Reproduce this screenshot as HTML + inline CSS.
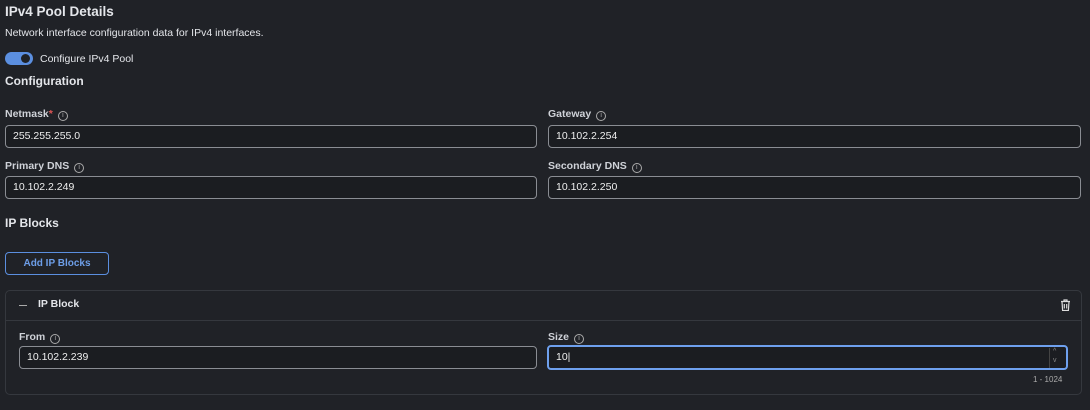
<!DOCTYPE html>
<html><head><style>
body{margin:0;width:1090px;height:410px;background:#202227;font-family:"Liberation Sans",sans-serif;color:#e4e6ea;position:relative;overflow:hidden}
.a{position:absolute;white-space:nowrap}
.h1{font-size:13.5px;font-weight:bold}
.lbl{font-size:10.5px;font-weight:bold;color:#cfd2d8}
.i{display:inline-block;width:8px;height:8px;border:1px solid #aaa;border-radius:50%;font-size:7px;line-height:8px;text-align:center;color:#aaa;margin-left:5px;vertical-align:0px;font-weight:normal}
.in{position:absolute;height:21px;border:1px solid #8a8d93;border-radius:4px;background:#1b1d21;font-size:10.5px;line-height:21px;padding-left:7px;box-sizing:content-box;color:#eee}
</style></head><body>
<div class="a h1" style="left:5px;top:4px">IPv4 Pool Details</div>
<div class="a" style="left:5px;top:27px;font-size:10.5px">Network interface configuration data for IPv4 interfaces.</div>
<div class="a" style="left:5px;top:52px;width:28px;height:13px;border-radius:7px;background:#5b8fe0"><div style="position:absolute;right:3px;top:2px;width:9px;height:9px;border-radius:50%;background:#1f2227"></div></div>
<div class="a" style="left:40px;top:53px;font-size:10.5px">Configure IPv4 Pool</div>
<div class="a" style="left:5px;top:74px;font-size:12px;font-weight:bold">Configuration</div>
<div class="a lbl" style="left:5px;top:108px">Netmask<span style="color:#e05555">*</span><span class="i">i</span></div>
<div class="in" style="left:5px;top:125px;width:523px">255.255.255.0</div>
<div class="a lbl" style="left:548px;top:108px">Gateway<span class="i">i</span></div>
<div class="in" style="left:548px;top:125px;width:524px">10.102.2.254</div>
<div class="a lbl" style="left:5px;top:160px">Primary DNS<span class="i">i</span></div>
<div class="in" style="left:5px;top:176px;width:523px">10.102.2.249</div>
<div class="a lbl" style="left:548px;top:160px">Secondary DNS<span class="i">i</span></div>
<div class="in" style="left:548px;top:176px;width:524px">10.102.2.250</div>
<div class="a" style="left:5px;top:216px;font-size:12px;font-weight:bold">IP Blocks</div>
<div class="a" style="left:5px;top:252px;width:102px;height:21px;border:1px solid #5b8fe0;border-radius:4px;color:#6d9ee8;font-size:10px;font-weight:bold;text-align:center;line-height:21px">Add IP Blocks</div>
<div class="a" style="left:5px;top:290px;width:1075px;height:103px;border:1px solid #35383e;border-radius:5px"></div>
<div class="a" style="left:6px;top:320px;width:1075px;height:1px;background:#35383e"></div>
<div class="a" style="left:19px;top:305px;width:8px;height:1px;background:#aaa"></div>
<div class="a" style="left:38px;top:298px;font-size:10.5px;font-weight:bold">IP Block</div>
<svg class="a" style="left:1060px;top:299px" width="11" height="12" viewBox="0 0 11 12"><path d="M1 2.5h9M4 2.5V1h3v1.5M2 2.5l.6 9h5.8l.6-9M4.3 5v4.5M6.7 5v4.5" stroke="#ddd" fill="none" stroke-width="1.2"/></svg>
<div class="a lbl" style="left:19px;top:331px">From<span class="i">i</span></div>
<div class="in" style="left:19px;top:346px;width:509px">10.102.2.239</div>
<div class="a lbl" style="left:548px;top:331px">Size<span class="i">i</span></div>
<div class="in" style="left:547px;top:345px;width:510px;border:2px solid #6ea0ee;height:21px">10|</div>
<div class="a" style="left:1049px;top:348px;width:1px;height:20px;background:#444"></div>
<div class="a" style="left:1053px;top:347px;font-size:7px;color:#888;line-height:9px">^<br>v</div>
<div class="a" style="left:1033px;top:375px;font-size:8px;color:#aaa">1 - 1024</div>
</body></html>
